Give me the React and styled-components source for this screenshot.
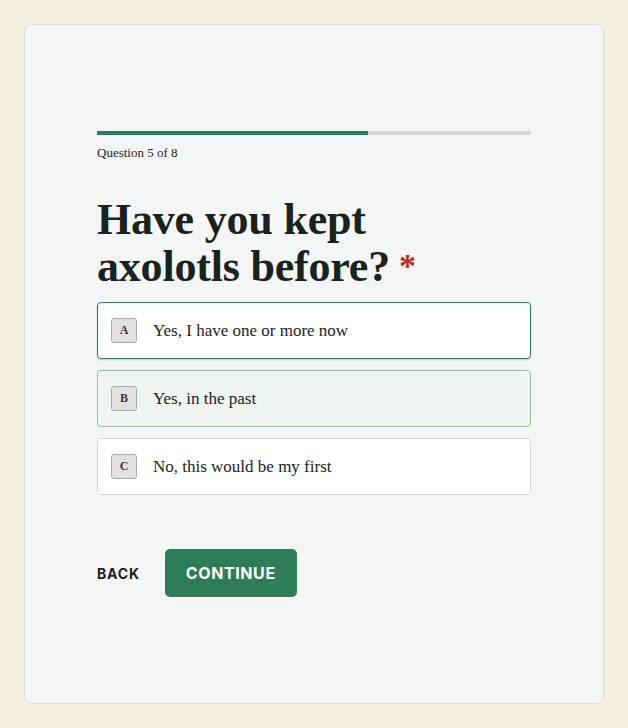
import React from 'react'
import styled, { createGlobalStyle } from 'styled-components'

const GlobalStyle = createGlobalStyle`
  html, body {
    margin: 0;
    padding: 0;
    background: #f5efe0;
  }
  * { box-sizing: border-box; }
`

const Page = styled.div`
  padding: 24px;
  min-height: 728px;
`

const Card = styled.main`
  width: 580px;
  height: 680px;
  background: #f4f6f5;
  border: 1px solid #d9dcd8;
  border-radius: 8px;
  padding: 106px 72px 0 72px;
  font-family: "Liberation Serif", "Times New Roman", serif;
  color: #1b241f;
`

const Track = styled.div`
  height: 4px;
  background: #d8d8d6;
  width: 434px;
`

const Fill = styled.div`
  height: 100%;
  background: #2e7d57;
`

const Counter = styled.p`
  margin: 10px 0 0;
  font-size: 13px;
  color: #1b241f;
`

const Heading = styled.h1`
  margin: 36px 0 12px;
  max-width: 340px;
  font-size: 44px;
  line-height: 46px;
  font-weight: 700;
  letter-spacing: -0.2px;
  color: #19231e;
`

const Required = styled.span`
  color: #c0281d;
  font-size: 34px;
  margin-left: 9px;
  vertical-align: 4px;
`

const Options = styled.div`
  display: flex;
  flex-direction: column;
  gap: 11px;
`

const Option = styled.button`
  display: flex;
  align-items: center;
  gap: 16px;
  height: 57px;
  padding: 0 13px;
  width: 434px;
  text-align: left;
  font-family: inherit;
  font-size: 17px;
  color: #1b241f;
  cursor: pointer;
  border-radius: 4px;
  background: ${p => (p.$selected ? '#eff5f1' : '#fff')};
  border: 1px solid ${p => (p.$focused ? '#2e7d57' : p.$selected ? '#8cbfa2' : '#d7d9d7')};
  box-shadow: ${p => (p.$focused ? '0 1px 2px rgba(0,0,0,0.2)' : 'none')};
`

const Key = styled.span`
  display: inline-flex;
  align-items: center;
  justify-content: center;
  width: 26px;
  height: 25px;
  background: #e1e1e1;
  border: 1px solid #a9aaa9;
  border-radius: 3px;
  font-size: 12px;
  font-weight: 700;
  color: #3a3a3a;
`

const Actions = styled.div`
  display: flex;
  align-items: center;
  gap: 25px;
  margin-top: 54px;
`

const BackButton = styled.button`
  background: none;
  border: none;
  padding: 0;
  font-family: Inter, "Liberation Sans", sans-serif;
  font-weight: 700;
  font-size: 14px;
  letter-spacing: 0.8px;
  color: #1e1e1e;
  cursor: pointer;
`

const ContinueButton = styled.button`
  width: 132px;
  height: 48px;
  background: #2e7d57;
  color: #fff;
  border: none;
  border-radius: 5px;
  font-family: Inter, "Liberation Sans", sans-serif;
  font-weight: 700;
  font-size: 16px;
  letter-spacing: 0.6px;
  cursor: pointer;
`

const options = [
  { key: 'A', label: 'Yes, I have one or more now', focused: true },
  { key: 'B', label: 'Yes, in the past', selected: true },
  { key: 'C', label: 'No, this would be my first' },
]

export default function App() {
  const step = 5
  const total = 8
  return (
    <Page>
      <GlobalStyle />
      <Card>
        <Track>
          <Fill style={{ width: `${(step / total) * 100}%` }} />
        </Track>
        <Counter>Question {step} of {total}</Counter>
        <Heading>
          Have you kept axolotls before?<Required>*</Required>
        </Heading>
        <Options>
          {options.map(o => (
            <Option key={o.key} $selected={o.selected} $focused={o.focused}>
              <Key>{o.key}</Key>
              {o.label}
            </Option>
          ))}
        </Options>
        <Actions>
          <BackButton>BACK</BackButton>
          <ContinueButton>CONTINUE</ContinueButton>
        </Actions>
      </Card>
    </Page>
  )
}
